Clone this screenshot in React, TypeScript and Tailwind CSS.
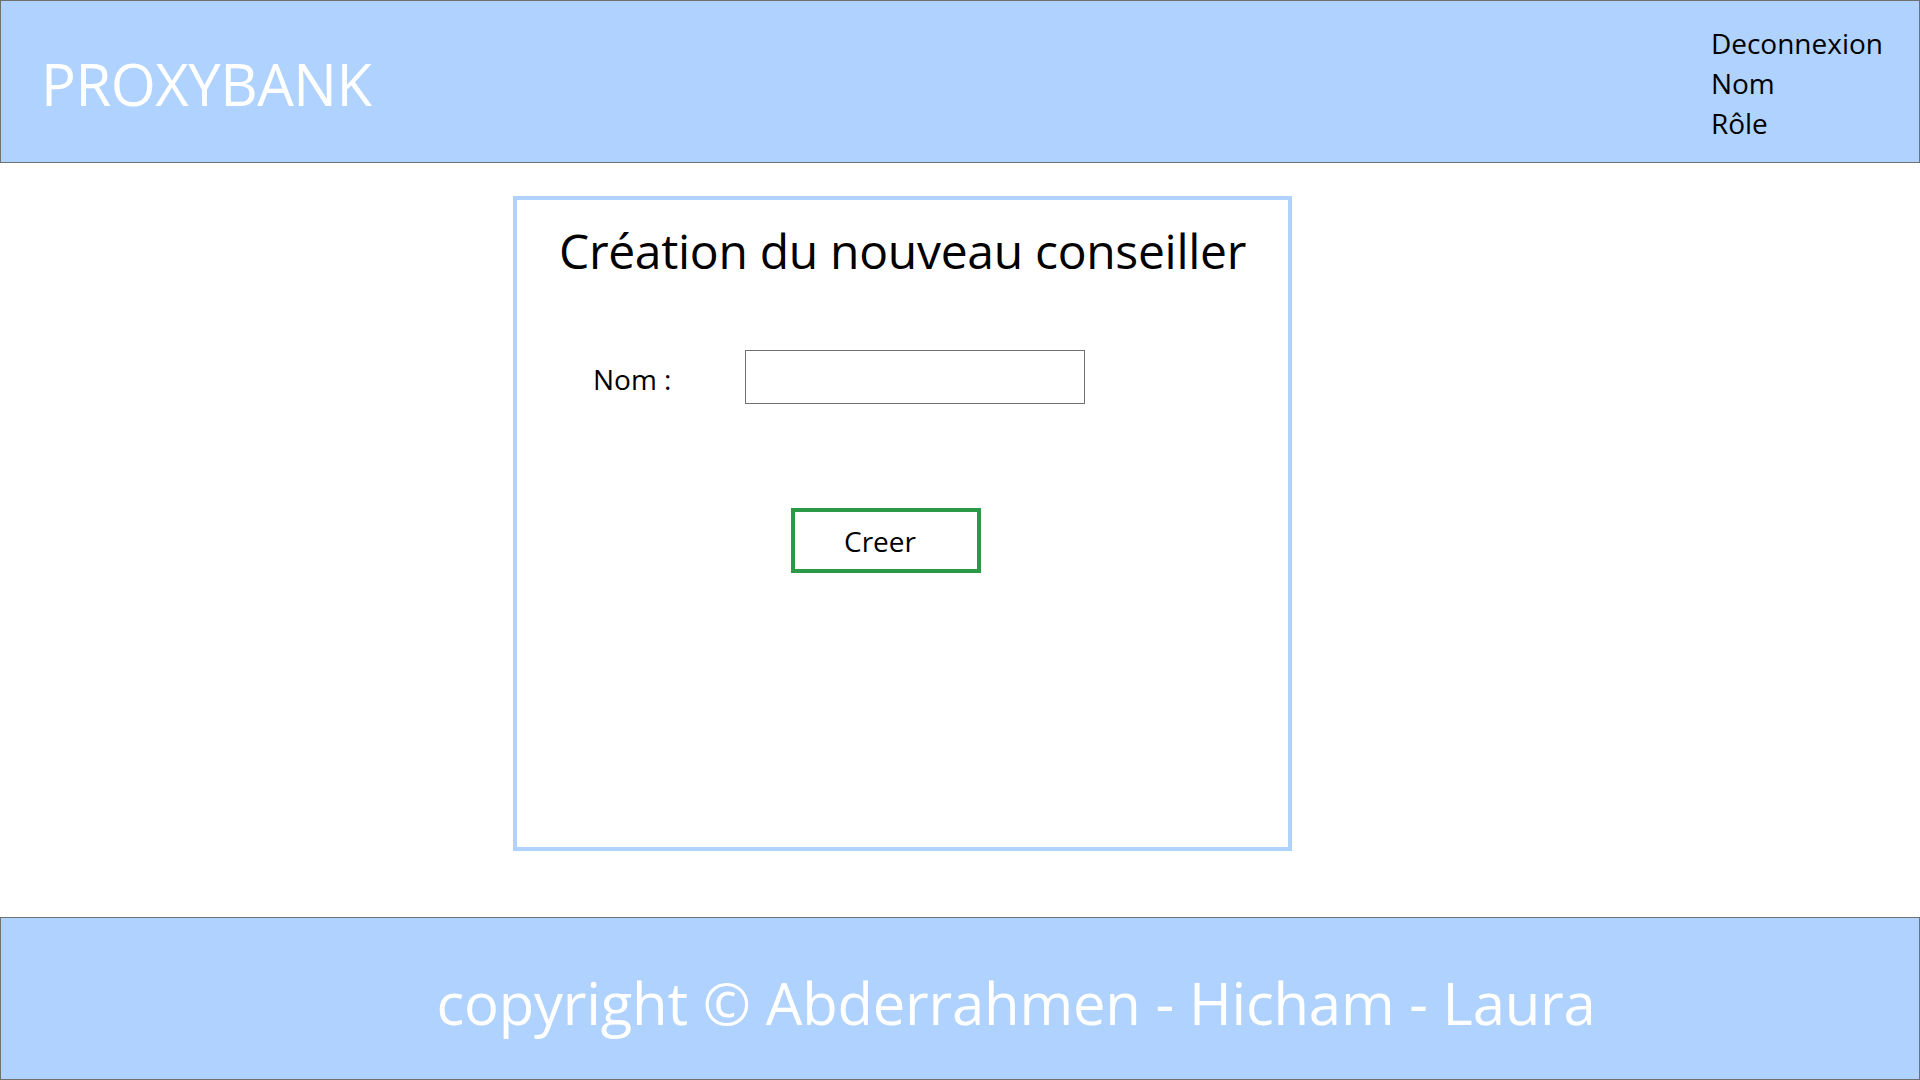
import React from 'react';

const font = { fontFamily: '"Open Sans", "Noto Sans", sans-serif' };

function Header() {
  return (
    <header className="h-[163px] shrink-0 flex justify-between border border-[#707070] bg-[#b0d2fe]">
      <div className="pl-[40px] pt-[53px] text-[58px] leading-[60px] text-white tracking-[-0.5px]">PROXYBANK</div>
      <nav className="pr-[36px] pt-[22px] flex flex-col text-[28px] leading-[40px] text-black">
        <a>Deconnexion</a>
        <a>Nom</a>
        <a>Rôle</a>
      </nav>
    </header>
  );
}

function NewAdvisorForm() {
  return (
    <section className="w-[779px] h-[655px] border-4 border-[#b0d2fe] flex flex-col">
      <h1 className="pt-[27px] text-center text-[48px] leading-[48px] text-black tracking-[-0.3px]">
        Création du nouveau conseiller
      </h1>
      <div className="mt-[75px] flex items-center pl-[76px]">
        <label className="w-[152px] pt-[4px] text-[28px] text-black">Nom :</label>
        <input type="text" className="w-[340px] h-[54px] border border-[#707070] bg-white outline-none" />
      </div>
      <div className="mt-[104px] pl-[274px]">
        <button className="w-[190px] h-[65px] border-4 border-[#2a9a47] bg-white text-[28px] text-black pr-[12px]">
          Creer
        </button>
      </div>
    </section>
  );
}

function Footer() {
  return (
    <footer className="h-[163px] shrink-0 flex items-center justify-center pl-[112px] pt-[8px] border border-[#707070] bg-[#b0d2fe]">
      <p className="text-[58px] leading-none text-white tracking-[-0.2px]">copyright © Abderrahmen - Hicham - Laura</p>
    </footer>
  );
}

export default function App() {
  return (
    <div className="w-[1920px] h-[1080px] flex flex-col bg-white overflow-hidden" style={font}>
      <Header />
      <main className="flex-1 pl-[513px] pt-[33px]">
        <NewAdvisorForm />
      </main>
      <Footer />
    </div>
  );
}
